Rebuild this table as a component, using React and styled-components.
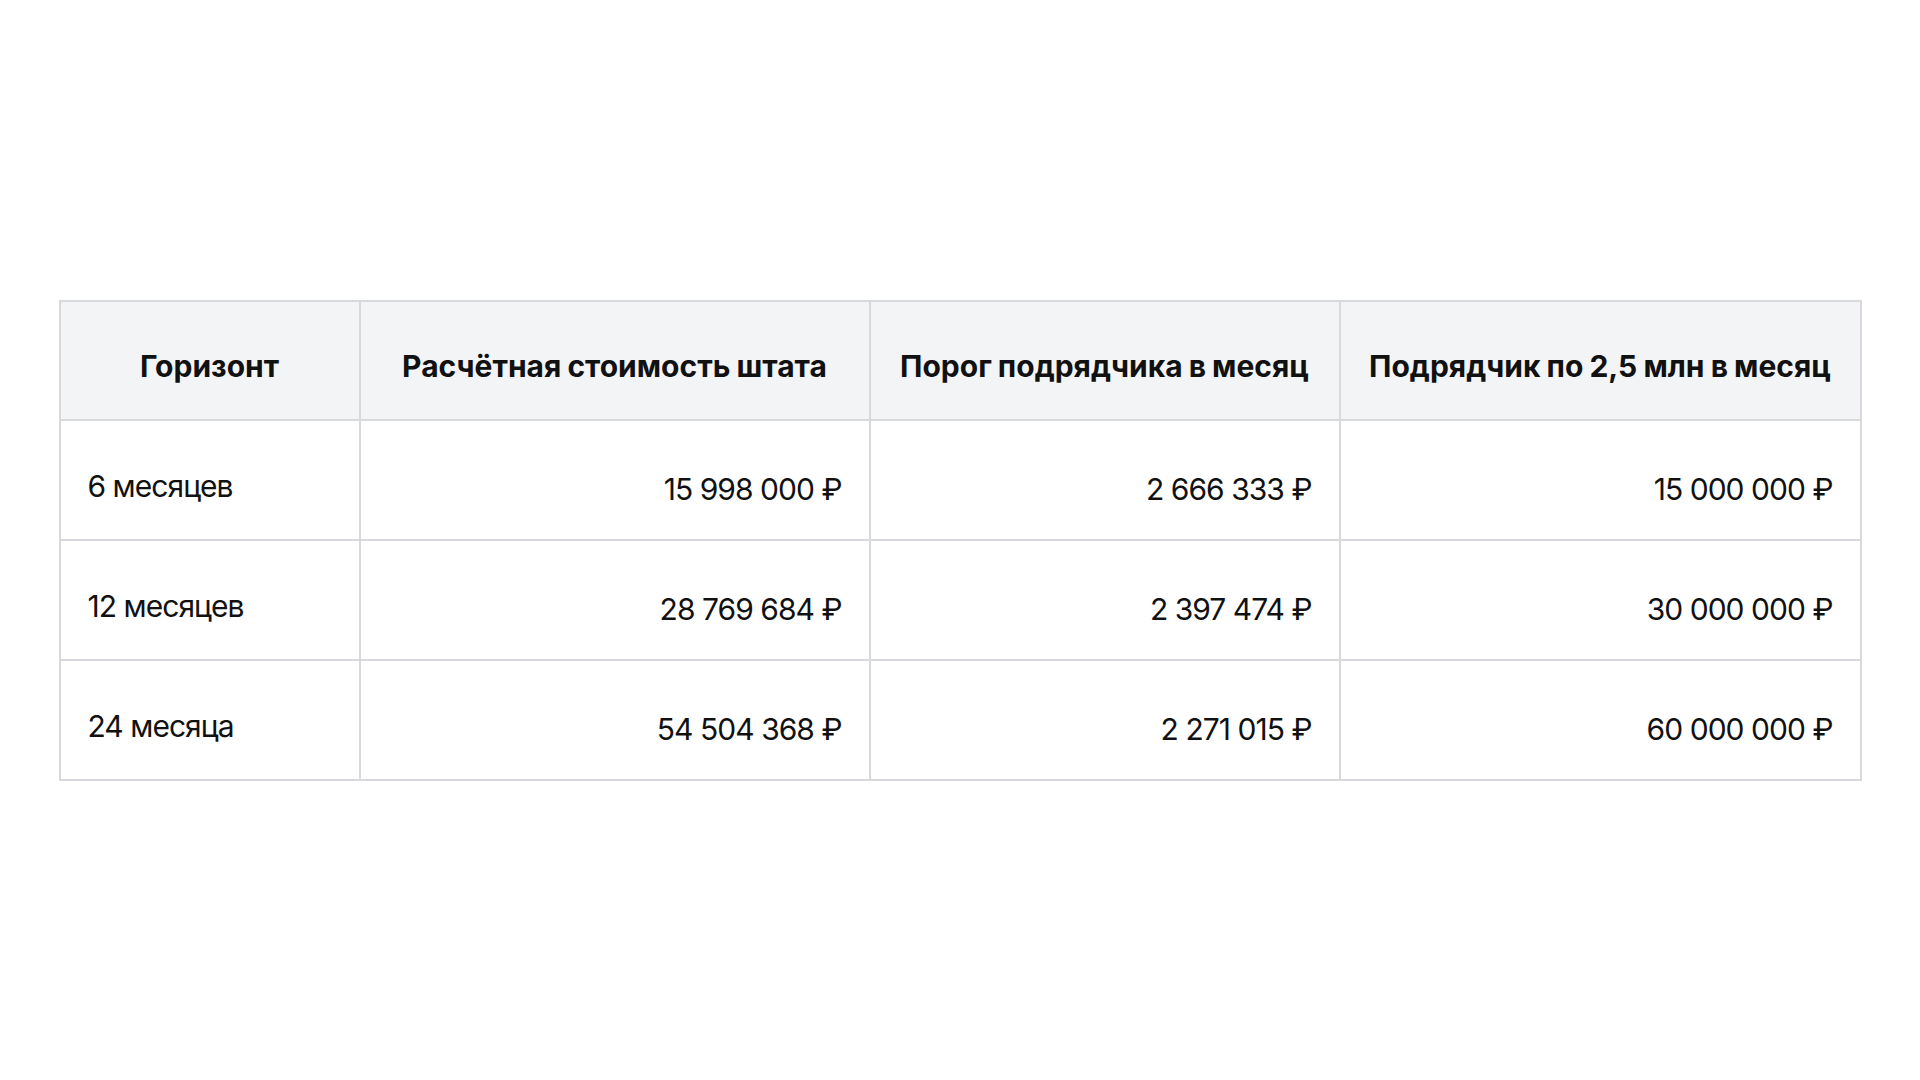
import React from "react";
import styled, { createGlobalStyle } from "styled-components";

const Global = createGlobalStyle`
  html, body {
    margin: 0;
    padding: 0;
    background: #ffffff;
  }
  body {
    font-family: Inter, "Noto Sans", sans-serif;
    color: #111111;
  }
`;

const Page = styled.main`
  width: 1920px;
  height: 1080px;
  display: flex;
  align-items: center;
  justify-content: center;
`;

const Table = styled.table`
  width: 1801px;
  table-layout: fixed;
  border-collapse: collapse;
  font-family: Inter, "Noto Sans", sans-serif;
  font-size: 30px;
  line-height: 42px;
  color: #111111;
`;

const Col = styled.col`
  width: ${(p) => p.$w}px;
`;

const HeadRow = styled.tr`
  background: #f3f4f6;
`;

const HeadCell = styled.th`
  border: 2px solid #d8d9dd;
  padding: 43px 27px 32px;
  font-weight: 700;
  word-spacing: -1px;
  text-align: center;
  vertical-align: middle;
  white-space: nowrap;
`;

const Cell = styled.td`
  border: 2px solid #d8d9dd;
  padding: ${(p) => (p.$num ? "47px 27px 29px" : "44px 27px 32px")};
  font-weight: 400;
  letter-spacing: -0.032em;
  text-align: ${(p) => (p.$num ? "right" : "left")};
  vertical-align: middle;
  white-space: nowrap;
`;

const columns = [
  "Горизонт",
  "Расчётная стоимость штата",
  "Порог подрядчика в месяц",
  "Подрядчик по 2,5 млн в месяц",
];

const widths = [300, 510, 470, 521];

const rows = [
  ["6 месяцев", "15 998 000 ₽", "2 666 333 ₽", "15 000 000 ₽"],
  ["12 месяцев", "28 769 684 ₽", "2 397 474 ₽", "30 000 000 ₽"],
  ["24 месяца", "54 504 368 ₽", "2 271 015 ₽", "60 000 000 ₽"],
];

export default function App() {
  return (
    <>
      <Global />
      <Page>
        <Table>
          <colgroup>
            {widths.map((w, i) => (
              <Col key={i} $w={w} />
            ))}
          </colgroup>
          <thead>
            <HeadRow>
              {columns.map((c) => (
                <HeadCell key={c}>{c}</HeadCell>
              ))}
            </HeadRow>
          </thead>
          <tbody>
            {rows.map((r) => (
              <tr key={r[0]}>
                {r.map((v, i) => (
                  <Cell key={i} $num={i > 0}>
                    {v}
                  </Cell>
                ))}
              </tr>
            ))}
          </tbody>
        </Table>
      </Page>
    </>
  );
}
